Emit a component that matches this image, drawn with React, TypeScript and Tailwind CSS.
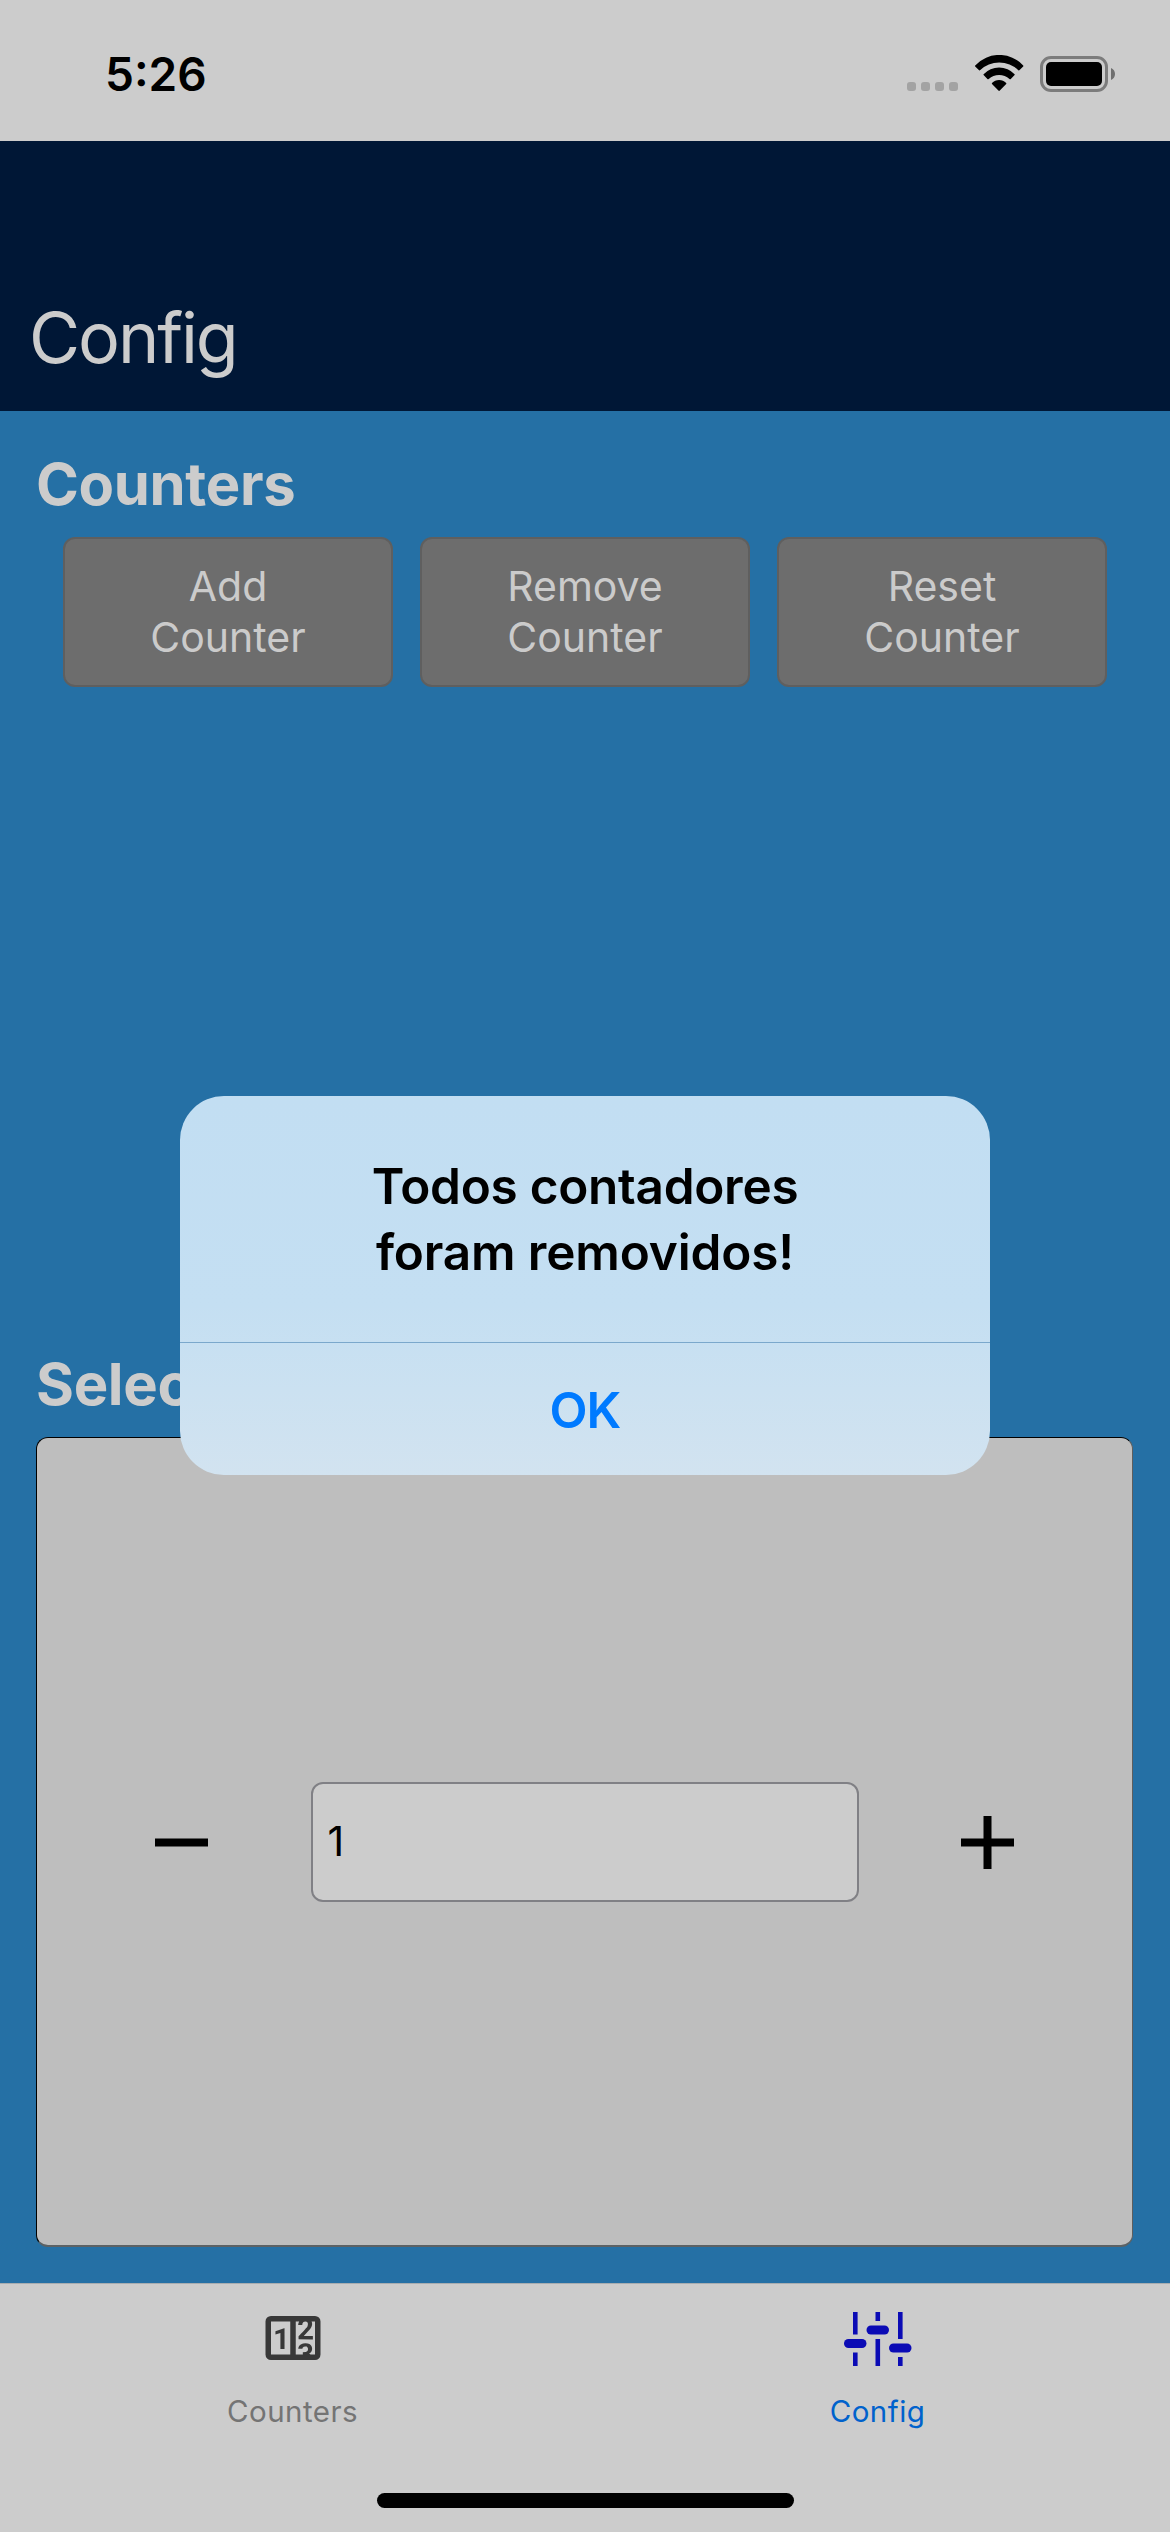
import type { ReactNode } from "react";

function WifiIcon() {
  return (
    <svg width="49" height="37" viewBox="0 0 49 37" className="mt-[55px] ml-[17px] shrink-0">
      <path d="M0.2 10.4A32.7 32.7 0 0 1 48.2 10.4Q48.6 10.9 48.2 11.4L44.6 15.1Q44 15.7 43.4 15.2A27.8 27.8 0 0 0 5 15.2Q4.4 15.7 3.8 15.1L0.2 11.4Q-0.2 10.9 0.2 10.4Z" />
      <path d="M8.6 19.2A21.1 21.1 0 0 1 39.6 19.2Q40 19.6 39.6 20L35.8 24Q35.2 24.6 34.5 24A15.7 15.7 0 0 0 13.7 24Q13 24.6 12.4 24L8.6 20Q8.2 19.6 8.6 19.2Z" />
      <path d="M17 28A9.7 9.7 0 0 1 31.2 28Q31.6 28.5 31.2 28.9L24.8 35.6Q24.1 36.2 23.4 35.6L17 28.9Q16.6 28.5 17 28Z" />
    </svg>
  );
}

function StatusBar() {
  return (
    <div className="flex h-[141px] shrink-0 items-start bg-[#cccccc] text-black">
      <span className="mt-11 ml-[105px] text-[46px] leading-[60px] font-semibold">5:26</span>
      <div className="mt-[82px] ml-auto flex gap-[5px]">
        <i className="size-[9px] rounded-[3px] bg-[#a3a3a3]" />
        <i className="size-[9px] rounded-[3px] bg-[#a3a3a3]" />
        <i className="size-[9px] rounded-[3px] bg-[#a3a3a3]" />
        <i className="size-[9px] rounded-[3px] bg-[#a3a3a3]" />
      </div>
      <WifiIcon />
      <div className="mt-14 ml-4 flex h-9 w-[68px] rounded-[11px] border-[3px] border-[#7c7c7c] p-[3px]">
        <div className="flex-1 rounded-[5px] bg-black" />
      </div>
      <svg width="4" height="12" viewBox="0 0 4 12" className="mt-[68px] mr-[55px] ml-[3px]">
        <path d="M0 0C2.4 1 4 3.2 4 6S2.4 11 0 12Z" fill="#6f6f6f" />
      </svg>
    </div>
  );
}

function ActionButton({ top, bottom }: { top: string; bottom: string }) {
  return (
    <button className="flex h-[150px] flex-col items-center justify-center rounded-xl border-2 border-[#5f5f5f] bg-[#6d6d6d] pb-px text-[41px] leading-[51px] text-[#cbcbcb]">
      <span>{top}</span>
      <span>{bottom}</span>
    </button>
  );
}

function Heading({ children }: { children: ReactNode }) {
  return (
    <h2 className="h-[70px] text-[58px] leading-[70px] font-bold tracking-[-0.34px] whitespace-nowrap text-[#cccccc]">
      {children}
    </h2>
  );
}

function Stepper() {
  return (
    <div className="flex h-[810px] w-[1097px] items-center rounded-xl border-t border-r border-b-2 border-l border-t-black border-r-[#5e5e5e] border-b-[#5c6265] border-l-black bg-[#bebebe] px-4 pt-px">
      <button className="flex flex-1 justify-center" aria-label="Decrease">
        <svg width="53" height="53" viewBox="0 0 53 53">
          <path d="M0 22.5H53V30.5H0Z" />
        </svg>
      </button>
      <div className="flex h-[120px] w-[548px] items-center rounded-xl border-2 border-[#808085] bg-[#cccccc] pb-0.5 pl-[15px] text-[41px] leading-[50px] text-black">
        1
      </div>
      <button className="flex flex-1 justify-center" aria-label="Increase">
        <svg width="53" height="53" viewBox="0 0 53 53">
          <path d="M22.5 0H30.5V22.5H53V30.5H30.5V53H22.5V30.5H0V22.5H22.5Z" />
        </svg>
      </button>
    </div>
  );
}

function CounterIcon() {
  return (
    <svg width="66" height="66" viewBox="0 0 24 24" fill="#383838">
      <path d="M4,4H20A2,2 0 0,1 22,6V18A2,2 0 0,1 20,20H4A2,2 0 0,1 2,18V6A2,2 0 0,1 4,4M4,6V18H11V6H4M20,18V6H18.76C19,6.54 18.95,7.07 18.95,7.13C18.88,7.8 18.41,8.5 18.24,8.75L15.91,11.3L19.23,11.28L19.24,12.5L14.04,12.47L14,11.47C14,11.47 17.05,8.24 17.2,7.95C17.34,7.67 17.91,6 16.5,6C15.27,6.05 15.41,7.3 15.41,7.3L13.87,7.31C13.87,7.31 13.88,6.65 14.25,6H13V18H15.58L15.57,17.14L16.54,17.13C16.54,17.13 17.45,16.97 17.46,16.08C17.5,15.08 16.65,15.08 16.5,15.08C16.37,15.08 15.43,15.13 15.43,15.95H13.91C13.91,15.95 13.95,13.89 16.5,13.89C19.1,13.89 18.96,15.91 18.96,15.91C18.96,15.91 19,17.16 17.85,17.63L18.37,18H20M8.92,16H7.42V10.2L5.62,10.76V9.53L8.76,8.41H8.92V16Z" />
    </svg>
  );
}

function SlidersIcon() {
  return (
    <svg width="67" height="54" viewBox="0 0 67 54" fill="#0b0bb5" className="mt-0.5 overflow-visible">
      <path d="M9 0h4.6v22.5H9zM9 40.5h4.6V54H9zM31.5 0h4.6v9h-4.6zM31.5 27h4.6v27h-4.6zM54 0h4.6v27H54zM54 45h4.6v9H54z" />
      <rect x="0" y="27" width="22.5" height="9" rx="4.5" />
      <rect x="22.5" y="13.5" width="22.5" height="9" rx="4.5" />
      <rect x="45" y="31.5" width="22.5" height="9" rx="4.5" />
    </svg>
  );
}

function Tab({ icon, label, active }: { icon: ReactNode; label: string; active?: boolean }) {
  return (
    <button className="flex flex-1 flex-col items-center pt-[21px]">
      <span className="flex h-[66px] items-center">{icon}</span>
      <span
        className={
          active
            ? "mt-[22px] text-[29.5px] leading-9 tracking-[0.46px] text-[#0062cc]"
            : "mt-[22px] text-[29.5px] leading-9 tracking-[0.46px] text-[#747474]"
        }
      >
        {label}
      </span>
    </button>
  );
}

function TabBar() {
  return (
    <nav className="flex h-[249px] shrink-0 flex-col border-t border-[#a9adb0] bg-[#cccccc]">
      <div className="flex h-[209px]">
        <Tab icon={<CounterIcon />} label="Counters" />
        <Tab icon={<SlidersIcon />} label="Config" active />
      </div>
      <div className="h-[15px] w-[417px] self-center rounded-full bg-black" />
    </nav>
  );
}

function AlertDialog() {
  return (
    <div
      role="alertdialog"
      className="absolute top-[1096px] left-[180px] flex h-[379px] w-[810px] flex-col overflow-hidden rounded-[44px] bg-linear-to-b from-[#c2def2] via-[#c4dff2] via-55% to-[#d2e3f0] text-center text-[49.5px] font-semibold"
    >
      <div className="h-[247px] border-b border-[#7ba8cc] pt-[57px] leading-[66px] text-black">
        <p className="tracking-[-0.28px]">Todos contadores</p>
        <p className="tracking-[-0.15px]">foram removidos!</p>
      </div>
      <button className="flex-1 pt-0.5 tracking-[-0.8px] text-[#007aff]">OK</button>
    </div>
  );
}

export default function App() {
  return (
    <div className="relative flex h-[2532px] w-[1170px] flex-col overflow-hidden bg-[#2570a5] font-[Inter,sans-serif]">
      <StatusBar />
      <header className="h-[270px] shrink-0 bg-[#001736] pt-[155px] pl-[29px]">
        <h1 className="text-[70px] leading-[83px] tracking-[-2.1px] text-[#cccccc]">Config</h1>
      </header>
      <main className="flex flex-1 flex-col px-9 pt-[38px] pb-9">
        <Heading>Counters</Heading>
        <div className="mx-[27px] mt-[18px] grid grid-cols-3 gap-[27px]">
          <ActionButton top="Add" bottom="Counter" />
          <ActionButton top="Remove" bottom="Counter" />
          <ActionButton top="Reset" bottom="Counter" />
        </div>
        <div className="mt-auto flex flex-col gap-[18px]">
          <Heading>Selected Counter</Heading>
          <Stepper />
        </div>
      </main>
      <TabBar />
      <AlertDialog />
    </div>
  );
}
